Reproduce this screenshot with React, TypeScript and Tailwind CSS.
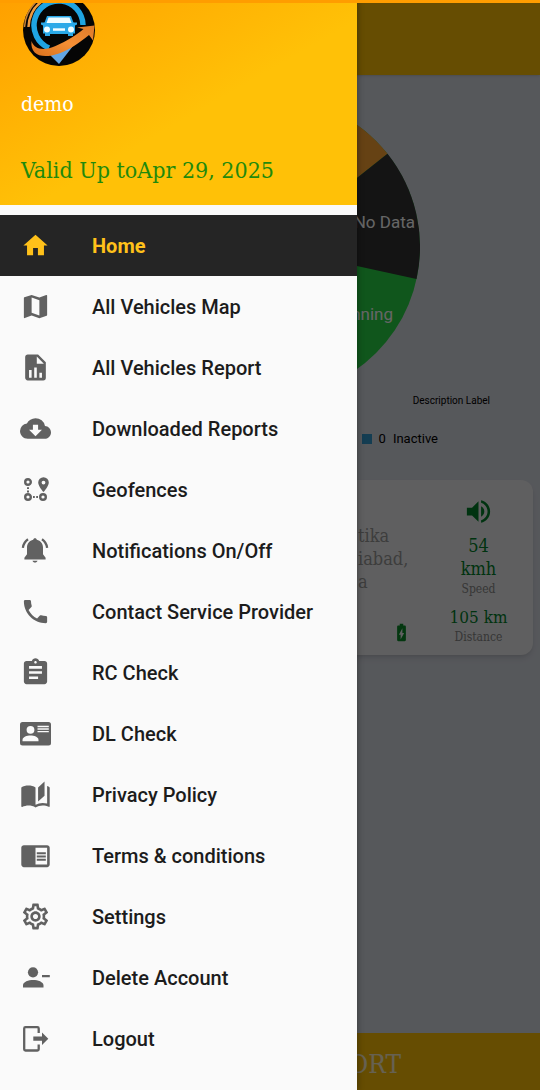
import type { ReactNode } from "react";
import {
  MdAssignment,
  MdBatteryChargingFull,
  MdChromeReaderMode,
  MdCloudDownload,
  MdMap,
  MdOutlineSettings,
  MdPhone,
  MdVolumeUp,
} from "react-icons/md";

const slab =
  "font-['Roboto_Slab','DejaVu_Serif_Condensed','DejaVu_Serif',serif]";

function Glyph({ size = 31, children }: { size?: number; children: ReactNode }) {
  return (
    <svg width={size} height={size} viewBox="0 0 24 24" fill="currentColor">
      {children}
    </svg>
  );
}

function Glyph36({ children }: { children: ReactNode }) {
  return (
    <svg width={36} height={36} viewBox="0 0 36 36" fill="currentColor">
      {children}
    </svg>
  );
}

const HomeIcon = () => (
  <Glyph size={29}>
    <path d="M10 20v-6h4v6h5v-8h3L12 3 2 12h3v8z" />
  </Glyph>
);

const ReportIcon = () => (
  <Glyph>
    <path d="M13 9h5.5L13 3.5V9M6 2h8l6 6v12a2 2 0 0 1-2 2H6c-1.11 0-2-.9-2-2V4c0-1.11.89-2 2-2m1 18h2v-6H7v6m4 0h2v-8h-2v8m4 0h2v-4h-2v4z" />
  </Glyph>
);

const GeofenceIcon = () => (
  <Glyph36>
    <g fill="none" stroke="currentColor" strokeWidth="2.4">
      <circle cx="11" cy="10" r="2.8" />
      <circle cx="11" cy="25" r="2.8" />
      <circle cx="26" cy="25" r="2.8" />
    </g>
    <path
      fillRule="evenodd"
      d="M26.500 5.300a5.300 5.300 0 0 0-5.300 5.300c0 3.800 5.300 9.600 5.300 9.600s5.300-5.800 5.300-9.600a5.300 5.300 0 0 0-5.300-5.300m0 3.400a1.900 1.900 0 1 1 0 3.800 1.900 1.900 0 0 1 0-3.800"
    />
    <path d="M10 15.200h2v1.800h-2zM10 18.600h2v1.800h-2zM16 24h1.800v2H16zM19.200 24h1.800v2h-1.800z" />
  </Glyph36>
);

const BellIcon = () => (
  <Glyph36>
    <path d="M18 5.200c-1 0-1.700.7-1.800 1.600C12.500 7.700 10 10.700 10 14.500v6.800L7.400 24.800v1.700h21.200v-1.700L26 21.300v-6.800c0-3.800-2.500-6.800-6.200-7.700-.1-.9-.8-1.600-1.800-1.600zM15.500 27.700c.3 1.200 1.300 1.800 2.500 1.800s2.200-.6 2.500-1.800z" />
    <path
      d="M11 6.300C8.200 8.300 6.300 11.200 5.900 14.800M25 6.300c2.800 2 4.700 4.900 5.100 8.500"
      fill="none"
      stroke="currentColor"
      strokeWidth="2.300"
    />
  </Glyph36>
);

const LicenceIcon = () => (
  <Glyph36>
    <rect x="3" y="6" width="31" height="23.500" rx="2.500" />
    <g fill="#fafafa">
      <circle cx="13.500" cy="13.800" r="3.900" />
      <path d="M5.500 25.200v-1.300c0-2.800 4.500-4.300 8-4.300s8 1.500 8 4.300v1.300z" />
      <path d="M20.500 9.700h11.300v1.500H20.500zM20.500 12.300h11.300v1.400H20.500zM20.500 14.900h11.300v1.400H20.500z" />
    </g>
  </Glyph36>
);

const BookIcon = () => (
  <Glyph>
    <path d="M19 2l-5 4.500v11l5-4.500V2M6.500 5C4.550 5 2.450 5.400 1 6.500v14.660c0 .25.25.5.5.5.1 0 .15-.07.25-.07 1.350-.65 3.300-1.090 4.750-1.090 1.950 0 4.050.4 5.500 1.500 1.350-.85 3.800-1.500 5.500-1.500 1.650 0 3.350.31 4.750 1.060.1.050.15.030.25.030.25 0 .5-.25.5-.5V6.500c-.6-.45-1.250-.75-2-1V19c-1.100-.35-2.300-.5-3.500-.5-1.700 0-4.150.65-5.500 1.500V6.500C10.550 5.400 8.450 5 6.500 5z" />
  </Glyph>
);

const RemoveUserIcon = () => (
  <Glyph36>
    <circle cx="16" cy="12.300" r="5.100" />
    <path d="M6 27.500v-2.300c0-3.400 5.500-5.300 10.200-5.300s10.300 1.900 10.300 5.300v2.300zM25 15h7.800v2.200H25z" />
  </Glyph36>
);

const LogoutIcon = () => (
  <Glyph36>
    <path
      d="M21.700 12V7.500c0-.8-.6-1.300-1.300-1.300H8.500c-.8 0-1.300.6-1.300 1.300v20.700c0 .8.600 1.300 1.300 1.300h11.900c.8 0 1.300-.6 1.300-1.300v-4.700"
      fill="none"
      stroke="currentColor"
      strokeWidth="2.300"
    />
    <path d="M16.300 15.600h8.700v-4.200l6.300 6.400-6.300 6.300v-4.300h-8.700z" />
  </Glyph36>
);

const menu = [
  { label: "Home", icon: <HomeIcon />, active: true },
  { label: "All Vehicles Map", icon: <MdMap size={31} /> },
  { label: "All Vehicles Report", icon: <ReportIcon /> },
  { label: "Downloaded Reports", icon: <MdCloudDownload size={31} /> },
  { label: "Geofences", icon: <GeofenceIcon /> },
  { label: "Notifications On/Off", icon: <BellIcon /> },
  { label: "Contact Service Provider", icon: <MdPhone size={31} /> },
  { label: "RC Check", icon: <MdAssignment size={31} /> },
  { label: "DL Check", icon: <LicenceIcon /> },
  { label: "Privacy Policy", icon: <BookIcon /> },
  { label: "Terms & conditions", icon: <MdChromeReaderMode size={31} /> },
  { label: "Settings", icon: <MdOutlineSettings size={31} /> },
  { label: "Delete Account", icon: <RemoveUserIcon /> },
  { label: "Logout", icon: <LogoutIcon /> },
];

function Logo() {
  return (
    <svg width="72" height="63" viewBox="0 9 72 63" aria-label="Logo">
      <defs>
        <linearGradient id="swoosh" x1="0" y1="1" x2="1" y2="0">
          <stop offset="0" stopColor="#d9701c" />
          <stop offset="0.500" stopColor="#f58f35" />
          <stop offset="1" stopColor="#dd7a2a" />
        </linearGradient>
      </defs>
      <circle cx="36" cy="36" r="36" fill="#050505" />
      <path d="M5.500 33C6 23 10 14 18 8" fill="none" stroke="#ee9a40" strokeWidth="2.500" />
      <path d="M1.500 33C2 24 6 15 13 8" fill="none" stroke="#c98235" strokeWidth="1.500" />
      <path d="M26 60l10 10 14-18z" fill="#62a5e4" />
      <path
        d="M26 54A24.500 24.500 0 1 1 60 31"
        fill="none"
        stroke="#1fa4e2"
        strokeWidth="5.500"
      />
      <path
        d="M8.500 47c3 9 13 10 24 5C44 47 55 40 60.500 35L54 33.500 71.500 31.500 70 46.500 66 41C56 49 46 56 36 59.500 20 65 7 62 8.500 47z"
        fill="url(#swoosh)"
      />
      <path d="M24 22h24l3 8H21z" fill="#2aa9e8" />
      <path d="M25.500 23.500h21l2 5.500h-25z" fill="#effcff" />
      <path
        d="M18 28.500h4l2 1.500h24l2-1.500h4v2l-2 1v8h-2v2.500h-5V40H27v2h-5v-2.500h-2v-8l-2-1z"
        fill="#2aa9e8"
      />
      <circle cx="24" cy="35.500" r="3" fill="#effcff" />
      <circle cx="48" cy="35.500" r="3" fill="#effcff" />
      <path d="M30 34.300h12v2.500H30z" fill="#effcff" />
    </svg>
  );
}

function StatusPie() {
  return (
    <svg
      width="300"
      height="300"
      viewBox="0 0 300 300"
      className="mx-auto mt-[22px] shrink-0 font-['Roboto',sans-serif] text-[17px]"
    >
      <circle cx="150" cy="150" r="150" fill="#28d746" />
      <path d="M150 150V0A150 150 0 0 1 267.500 56.700Z" fill="#ffa532" />
      <path d="M150 150L267.500 56.700A150 150 0 0 1 296.500 182Z" fill="#323232" />
      <text x="295" y="131" textAnchor="end" fill="#fff">
        No Data
      </text>
      <text x="273" y="223" textAnchor="end" fill="#fff">
        Running
      </text>
    </svg>
  );
}

function VehicleCard() {
  return (
    <section
      className={`${slab} mx-[7px] mt-[32px] flex h-[175px] rounded-xl bg-[#eeeeef] shadow-md`}
    >
      <div className="flex flex-1 flex-col justify-between pt-11 pb-[12px]">
        <p className="ml-auto w-[66px] text-[18px] leading-[23px] text-[#999]">
          tika
          <br />
          iabad,
          <br />a
        </p>
        <MdBatteryChargingFull size={21} className="mr-[12px] ml-auto text-[#0a8a2a]" />
      </div>
      <div className="flex w-[109px] flex-col items-center pt-4 text-center">
        <MdVolumeUp size={31} className="text-[#00802a]" />
        <p className="mt-[7px] text-[18px] leading-[23px] text-[#00802a]">
          54
          <br />
          kmh
        </p>
        <p className="text-[12px] leading-[18px] text-[#888]">Speed</p>
        <p className="mt-[8px] text-[17px] leading-[23px] text-[#00802a]">105 km</p>
        <p className="text-[12px] leading-[16px] text-[#888]">Distance</p>
      </div>
    </section>
  );
}

function Dashboard() {
  return (
    <main className="flex min-h-screen flex-col bg-[#d8dbe4] pt-[3px]">
      <header className="h-[72px] shrink-0 bg-[#ffc107] shadow" />
      <StatusPie />
      <div className="font-['Roboto',sans-serif] text-black">
        <p className="-mt-[3px] pr-[50px] text-right text-[10px] leading-[14px]">
          Description Label
        </p>
        <p className="mt-[22px] flex items-center justify-end gap-[7px] pr-[102px] text-[13px] leading-[18px]">
          <span className="size-[10px] bg-[#3399cc]" />
          <span>0</span>
          <span>Inactive</span>
        </p>
      </div>
      <VehicleCard />
      <footer className={`${slab} mt-auto bg-[#ffc107] pr-[139px] text-right`}>
        <button className="h-[57px] pt-[6px] text-[26px] text-white/80">REPORT</button>
      </footer>
    </main>
  );
}

function Drawer() {
  return (
    <aside className="relative w-[357px] max-w-full bg-[#fafafa] shadow-[1px_0_6px_rgba(0,0,0,0.3)]">
      <div
        className={`${slab} h-[205px] bg-linear-to-br from-[#ffa000] to-[#ffc107] to-55% px-[21px] pt-[3px]`}
      >
        <div className="ml-[2px] h-[63px]">
          <Logo />
        </div>
        <p className="mt-6 text-[21px] leading-[28px] text-white">demo</p>
        <p className="mt-9 text-[23px] leading-[32px] text-[#1f8a0c]">
          Valid Up toApr 29, 2025
        </p>
      </div>
      <nav className="mt-[10px] font-['Roboto',sans-serif] text-[20px]">
        {menu.map((item) => (
          <a
            key={item.label}
            href="#"
            className={`flex h-[61px] items-center gap-[39px] pl-[17px] ${
              item.active
                ? "bg-[#252525] font-bold text-[#ffc11a]"
                : "font-medium text-[#1c1c1c]"
            }`}
          >
            <span
              className={`flex size-9 shrink-0 items-center justify-center ${
                item.active ? "" : "text-[#616161]"
              }`}
            >
              {item.icon}
            </span>
            <span className="pt-px">{item.label}</span>
          </a>
        ))}
      </nav>
    </aside>
  );
}

export default function App() {
  return (
    <div className="relative overflow-hidden">
      <Dashboard />
      <div className="absolute inset-0 flex bg-black/60">
        <Drawer />
      </div>
      <div className="absolute inset-x-0 top-0 h-[3px] bg-[#ff9d00]" />
    </div>
  );
}
